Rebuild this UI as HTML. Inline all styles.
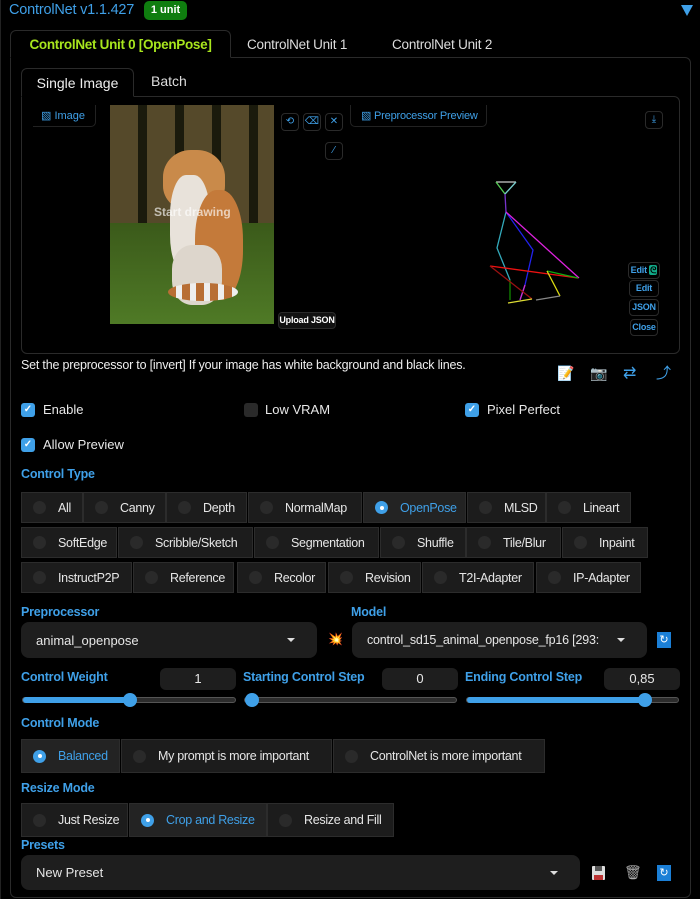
<!DOCTYPE html>
<html><head><meta charset="utf-8">
<style>
*{box-sizing:border-box;margin:0;padding:0}
body{width:700px;height:899px;background:#000;color:#e8e8e8;font-family:"Liberation Sans",sans-serif;font-size:13px;position:relative;overflow:hidden}
.a{position:absolute}
.blue{color:#3fa0e8}
.lbl{position:absolute;color:#3fa0e8;font-size:12.5px;font-weight:bold;letter-spacing:-0.2px}
.btn{position:absolute;background:#1c1c1c;border:1px solid #2c2c2c;height:31px;display:flex;align-items:center;padding-left:11px;font-size:12.5px;letter-spacing:-0.3px;color:#e6e6e6;white-space:nowrap;overflow:hidden}
.btn i{display:inline-block;width:13px;height:13px;border-radius:50%;background:#2a2a2a;margin-right:12px;flex:none}
.btn.on{background:#232323}
.btn.on i{background:#3fa0e8;position:relative}
.btn.on i:after{content:"";position:absolute;left:4.5px;top:4.5px;width:4px;height:4px;border-radius:50%;background:#fff}
.btn.on span{color:#3fa0e8}
.cb{position:absolute;width:14px;height:14px;border-radius:3px;background:#3fa0e8;color:#fff;font-size:10px;line-height:14px;text-align:center;font-weight:bold}
.cb.off{background:#2a2a2a}
.dd{position:absolute;background:#1e1e1e;border-radius:8px;height:36px;display:flex;align-items:center;padding-left:15px;padding-right:40px;font-size:13px;color:#e6e6e6;white-space:nowrap;overflow:hidden}
.dd:after{content:"";position:absolute;right:22px;top:16px;border:4px solid transparent;border-top:4px solid #ddd;border-bottom:0}
.num{position:absolute;background:#1e1e1e;border-radius:6px;height:22px;text-align:center;line-height:22px;font-size:13px}
.track{position:absolute;height:6px;border-radius:3px;background:#2c2c2c;border:1px solid #555}
.fill{position:absolute;left:0;top:-1px;height:6px;border-radius:3px;background:#3fa0e8}
.thumb{position:absolute;top:-5px;width:14px;height:14px;border-radius:50%;background:#3fa0e8}
.ib{position:absolute;width:18px;height:18px;border:1px solid #2a2a2a;border-radius:4px;color:#3fa0e8;font-size:10px;text-align:center;line-height:16px}
.eb{position:absolute;border:1px solid #2a2a2a;border-radius:4px;color:#3fa0e8;font-size:9px;font-weight:bold;text-align:center;line-height:15px;height:17px;white-space:nowrap;letter-spacing:-0.2px}
</style></head><body>
<div class="a" style="left:0;top:0;width:700px;height:899px;border-left:1px solid #222"></div>
<div class="a blue" style="left:9px;top:2px;font-size:14.5px;letter-spacing:-0.2px">ControlNet v1.1.427</div>
<div class="a" style="left:144px;top:1px;width:43px;height:19px;background:#0f7d0f;border-radius:5px;color:#fff;font-size:11px;font-weight:bold;text-align:center;line-height:19px">1 unit</div>
<div class="a" style="left:681px;top:5px;border:6px solid transparent;border-top:11px solid #3fa0e8;border-bottom:0"></div>

<div class="a" style="left:10px;top:57px;width:681px;height:841px;border:1px solid #2a2a2a;border-radius:0 6px 6px 6px"></div>
<div class="a" style="left:10px;top:30px;width:221px;height:28px;border:1px solid #2a2a2a;border-bottom:1px solid #000;border-radius:6px 6px 0 0;background:#000;color:#a8e61d;font-weight:bold;font-size:13.5px;letter-spacing:-0.3px;text-align:center;line-height:28px">ControlNet Unit 0 [OpenPose]</div>
<div class="a" style="left:247px;top:37px;font-size:13.5px;color:#ddd;letter-spacing:-0.2px">ControlNet Unit 1</div>
<div class="a" style="left:392px;top:37px;font-size:13.5px;color:#ddd;letter-spacing:-0.2px">ControlNet Unit 2</div>

<div class="a" style="left:21px;top:96px;width:659px;height:258px;border:1px solid #2a2a2a;border-radius:0 6px 6px 6px"></div>
<div class="a" style="left:21px;top:68px;width:113px;height:29px;border:1px solid #2a2a2a;border-bottom:1px solid #000;border-radius:6px 6px 0 0;background:#000;color:#eee;font-size:14px;text-align:center;line-height:28px">Single Image</div>
<div class="a" style="left:151px;top:73px;font-size:14px;color:#ddd">Batch</div>

<div class="a" style="left:33px;top:105px;width:63px;height:22px;border:1px solid #222;border-top:0;border-left:0;border-radius:0 0 5px 0;color:#3fa0e8;font-size:11px;line-height:22px;padding-left:8px">▧ Image</div>
<div class="a" style="left:110px;top:105px;width:164px;height:219px;overflow:hidden;background:#3b5a1a">
 <div class="a" style="left:0;top:0;width:164px;height:120px;background:repeating-linear-gradient(90deg,#55492a 0 28px,#1a1a0c 28px 37px)"></div>
 <div class="a" style="left:0;top:118px;width:164px;height:101px;background:linear-gradient(#3b5a1a,#4f7a26)"></div>
 <div class="a" style="left:53px;top:45px;width:62px;height:60px;border-radius:45% 45% 40% 40%;background:#c98a4a"></div>
 <div class="a" style="left:60px;top:70px;width:40px;height:100px;border-radius:40%;background:#e8e2da"></div>
 <div class="a" style="left:85px;top:85px;width:48px;height:110px;border-radius:45%;background:#c47a3a"></div>
 <div class="a" style="left:62px;top:140px;width:50px;height:60px;border-radius:40%;background:#ddd6cc"></div>
 <div class="a" style="left:58px;top:178px;width:70px;height:18px;border-radius:50%;background:repeating-linear-gradient(90deg,#b86e34 0 8px,#eee 8px 14px)"></div>
 <div class="a" style="left:44px;top:100px;color:rgba(255,255,255,.65);font-size:12px;font-weight:bold">Start drawing</div>
</div>
<div class="eb" style="left:278px;top:312px;width:58px;height:17px;color:#fff;background:#111">Upload JSON</div>
<div class="ib" style="left:281px;top:113px">⟲</div>
<div class="ib" style="left:303px;top:113px">⌫</div>
<div class="ib" style="left:325px;top:113px">✕</div>
<div class="ib" style="left:325px;top:142px">⁄</div>

<div class="a" style="left:350px;top:105px;width:137px;height:22px;border:1px solid #222;border-top:0;border-radius:0 0 5px 5px;color:#3fa0e8;font-size:11px;line-height:22px;padding-left:10px;white-space:nowrap;letter-spacing:-0.2px">▧ Preprocessor Preview</div>
<div class="ib" style="left:645px;top:111px">⤓</div>
<svg class="a" style="left:0;top:0" width="700" height="360">
 <g stroke-width="1.3" fill="none">
 <path d="M496 182 L516 182" stroke="#ccc"/><path d="M496 182 L505 194" stroke="#5c5"/><path d="M516 182 L505 194" stroke="#7cc"/>
 <path d="M505 194 L506 212" stroke="#73c"/>
 <path d="M506 212 L497 248 L510 280" stroke="#3ab"/><path d="M510 280 L510 300" stroke="#180"/>
 <path d="M506 212 L533 250 L525 285 L520 300" stroke="#22e"/><path d="M525 285 L520 300" stroke="#c3c"/>
 <path d="M506 212 L579 278" stroke="#d2d"/>
 <path d="M490 266 L578 278" stroke="#e11"/><path d="M490 266 L532 299" stroke="#911"/>
 <path d="M547 271 L578 278" stroke="#1a1"/><path d="M547 271 L560 296" stroke="#dd1"/>
 <path d="M536 300 L560 296" stroke="#888"/><path d="M508 303 L532 299" stroke="#dd3"/>
 </g>
</svg>
<div class="eb" style="left:628px;top:262px;width:32px">Edit <span style="background:#1a8;color:#000;border-radius:2px;padding:0 1px">ᘓ</span></div>
<div class="eb" style="left:629px;top:280px;width:30px">Edit</div>
<div class="eb" style="left:629px;top:299px;width:30px">JSON</div>
<div class="eb" style="left:630px;top:319px;width:28px">Close</div>

<div class="a" style="left:21px;top:358px;font-size:12.5px;color:#eee;letter-spacing:-0.2px">Set the preprocessor to [invert] If your image has white background and black lines.</div>
<div class="a" style="left:557px;top:365px;font-size:14px">📝</div>
<div class="a" style="left:590px;top:365px;font-size:14px;color:#bbb">📷</div>
<div class="a blue" style="left:623px;top:363px;font-size:16px">⇄</div>
<div class="a blue" style="left:656px;top:362px;font-size:15px">⤴</div>

<div class="cb" style="left:21px;top:403px">✓</div><div class="a" style="left:43px;top:402px">Enable</div>
<div class="cb off" style="left:244px;top:403px"></div><div class="a" style="left:265px;top:402px">Low VRAM</div>
<div class="cb" style="left:465px;top:403px">✓</div><div class="a" style="left:487px;top:402px">Pixel Perfect</div>
<div class="cb" style="left:21px;top:438px">✓</div><div class="a" style="left:43px;top:437px">Allow Preview</div>

<div class="lbl" style="left:21px;top:467px">Control Type</div>
<div class="btn" style="left:21px;top:492px;width:62px"><i></i><span>All</span></div>
<div class="btn" style="left:83px;top:492px;width:83px"><i></i><span>Canny</span></div>
<div class="btn" style="left:166px;top:492px;width:81px"><i></i><span>Depth</span></div>
<div class="btn" style="left:248px;top:492px;width:114px"><i></i><span>NormalMap</span></div>
<div class="btn on" style="left:363px;top:492px;width:103px"><i></i><span>OpenPose</span></div>
<div class="btn" style="left:467px;top:492px;width:79px"><i></i><span>MLSD</span></div>
<div class="btn" style="left:546px;top:492px;width:85px"><i></i><span>Lineart</span></div>

<div class="btn" style="left:21px;top:527px;width:96px"><i></i><span>SoftEdge</span></div>
<div class="btn" style="left:118px;top:527px;width:135px"><i></i><span>Scribble/Sketch</span></div>
<div class="btn" style="left:254px;top:527px;width:125px"><i></i><span>Segmentation</span></div>
<div class="btn" style="left:380px;top:527px;width:86px"><i></i><span>Shuffle</span></div>
<div class="btn" style="left:466px;top:527px;width:95px"><i></i><span>Tile/Blur</span></div>
<div class="btn" style="left:562px;top:527px;width:86px"><i></i><span>Inpaint</span></div>

<div class="btn" style="left:21px;top:562px;width:111px"><i></i><span>InstructP2P</span></div>
<div class="btn" style="left:133px;top:562px;width:101px"><i></i><span>Reference</span></div>
<div class="btn" style="left:237px;top:562px;width:89px"><i></i><span>Recolor</span></div>
<div class="btn" style="left:328px;top:562px;width:93px"><i></i><span>Revision</span></div>
<div class="btn" style="left:422px;top:562px;width:112px"><i></i><span>T2I-Adapter</span></div>
<div class="btn" style="left:536px;top:562px;width:105px"><i></i><span>IP-Adapter</span></div>

<div class="lbl" style="left:21px;top:605px">Preprocessor</div>
<div class="lbl" style="left:351px;top:605px">Model</div>
<div class="dd" style="left:21px;top:622px;width:296px">animal_openpose</div>
<div class="a" style="left:328px;top:632px;font-size:12px;color:#f33">💥</div>
<div class="dd" style="left:352px;top:622px;width:295px;font-size:12.5px;letter-spacing:-0.2px"><span style="display:block;width:240px;overflow:hidden">control_sd15_animal_openpose_fp16 [293:</span></div>
<div class="a" style="left:657px;top:632px;width:14px;height:16px;background:#1b7fd6;color:#fff;font-size:11px;text-align:center;line-height:16px">↻</div>

<div class="lbl" style="left:21px;top:670px">Control Weight</div>
<div class="num" style="left:160px;top:668px;width:76px">1</div>
<div class="lbl" style="left:243px;top:670px">Starting Control Step</div>
<div class="num" style="left:382px;top:668px;width:76px">0</div>
<div class="lbl" style="left:465px;top:670px">Ending Control Step</div>
<div class="num" style="left:604px;top:668px;width:76px">0,85</div>
<div class="track" style="left:22px;top:697px;width:214px"><div class="fill" style="width:108px"></div><div class="thumb" style="left:100px"></div></div>
<div class="track" style="left:244px;top:697px;width:213px"><div class="thumb" style="left:0px"></div></div>
<div class="track" style="left:466px;top:697px;width:213px"><div class="fill" style="width:180px"></div><div class="thumb" style="left:171px"></div></div>

<div class="lbl" style="left:21px;top:716px">Control Mode</div>
<div class="btn on" style="left:21px;top:739px;width:99px;height:34px"><i></i><span>Balanced</span></div>
<div class="btn" style="left:121px;top:739px;width:211px;height:34px"><i></i><span>My prompt is more important</span></div>
<div class="btn" style="left:333px;top:739px;width:212px;height:34px"><i></i><span>ControlNet is more important</span></div>

<div class="lbl" style="left:21px;top:781px">Resize Mode</div>
<div class="btn" style="left:21px;top:803px;width:107px;height:34px"><i></i><span>Just Resize</span></div>
<div class="btn on" style="left:129px;top:803px;width:138px;height:34px"><i></i><span>Crop and Resize</span></div>
<div class="btn" style="left:267px;top:803px;width:127px;height:34px"><i></i><span>Resize and Fill</span></div>

<div class="lbl" style="left:21px;top:838px">Presets</div>
<div class="dd" style="left:21px;top:855px;width:559px;height:35px">New Preset</div>
<div class="a" style="left:592px;top:866px;width:13px;height:14px;background:#ddd;border-radius:1px"><div class="a" style="left:3px;top:0;width:7px;height:5px;background:#555"></div><div class="a" style="left:2px;top:9px;width:9px;height:5px;background:#b33"></div></div>
<div class="a" style="left:624px;top:864px;font-size:14px;color:#aaa">🗑</div>
<div class="a" style="left:657px;top:865px;width:14px;height:16px;background:#1b7fd6;color:#fff;font-size:11px;text-align:center;line-height:16px">↻</div>
</body></html>
